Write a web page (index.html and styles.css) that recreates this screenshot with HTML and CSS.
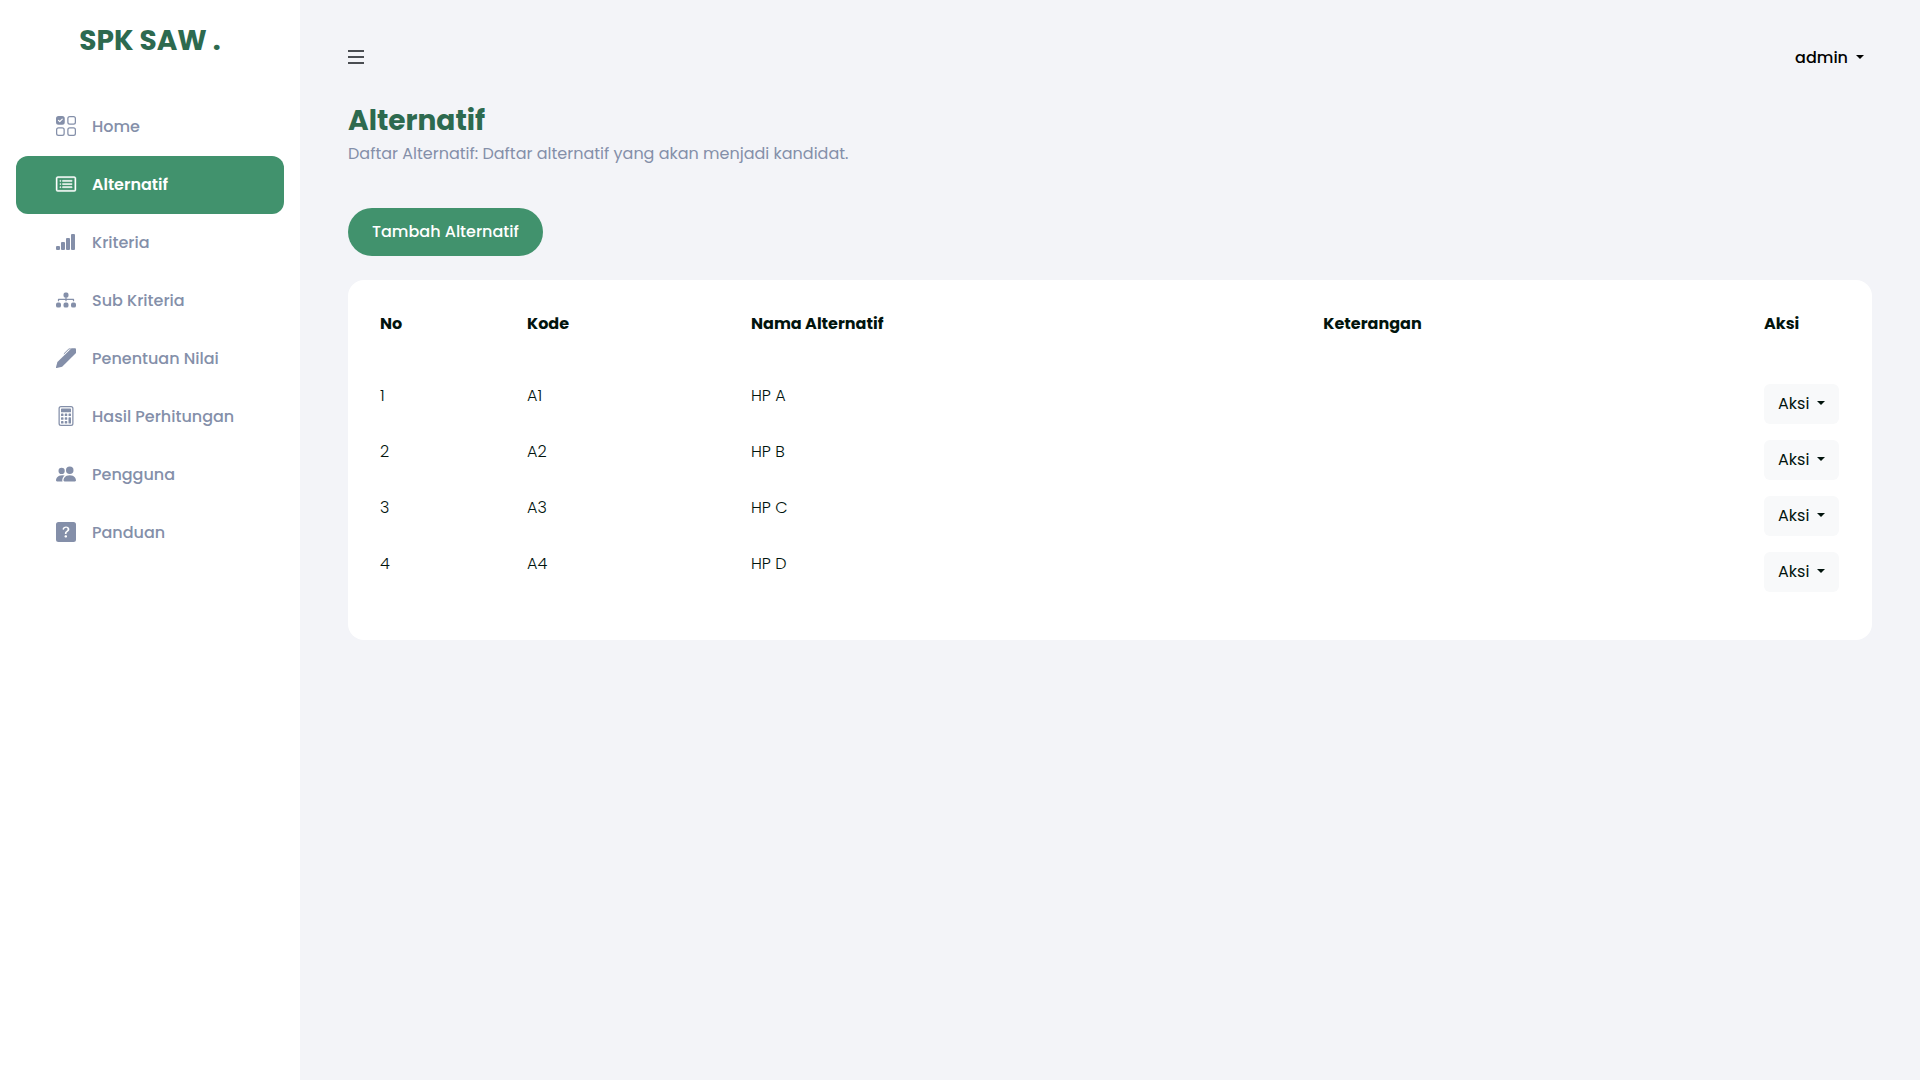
FILE: index.html
```html
<!DOCTYPE html>
<html lang="id">
<head>
<meta charset="utf-8">
<title>SPK SAW - Alternatif</title>
<meta name="viewport" content="width=device-width, initial-scale=1">
<link rel="stylesheet" href="styles.css">
</head>
<body>
<div class="layout">
  <aside class="sidebar">
    <a class="brand" href="#">SPK SAW .</a>
    <nav class="menu">
      <a class="menu-link" href="#"><svg class="icon" viewBox="0 0 16 16"><path d="M2 10h3a1 1 0 0 1 1 1v3a1 1 0 0 1-1 1H2a1 1 0 0 1-1-1v-3a1 1 0 0 1 1-1m9-9h3a1 1 0 0 1 1 1v3a1 1 0 0 1-1 1h-3a1 1 0 0 1-1-1V2a1 1 0 0 1 1-1m0 9a1 1 0 0 0-1 1v3a1 1 0 0 0 1 1h3a1 1 0 0 0 1-1v-3a1 1 0 0 0-1-1zm0-10a2 2 0 0 0-2 2v3a2 2 0 0 0 2 2h3a2 2 0 0 0 2-2V2a2 2 0 0 0-2-2zM2 9a2 2 0 0 0-2 2v3a2 2 0 0 0 2 2h3a2 2 0 0 0 2-2v-3a2 2 0 0 0-2-2zm7 2a2 2 0 0 1 2-2h3a2 2 0 0 1 2 2v3a2 2 0 0 1-2 2h-3a2 2 0 0 1-2-2zM0 2a2 2 0 0 1 2-2h3a2 2 0 0 1 2 2v3a2 2 0 0 1-2 2H2a2 2 0 0 1-2-2zm5.354.854a.5.5 0 1 0-.708-.708L3 3.793l-.646-.647a.5.5 0 1 0-.708.708l1 1a.5.5 0 0 0 .708 0z"/></svg>Home</a>
      <a class="menu-link active" href="#" aria-current="page"><svg class="icon icon-strong" viewBox="0 0 16 16"><path d="M14.5 3a.5.5 0 0 1 .5.5v9a.5.5 0 0 1-.5.5h-13a.5.5 0 0 1-.5-.5v-9a.5.5 0 0 1 .5-.5zm-13-1A1.500 1.500 0 0 0 0 3.500v9A1.500 1.500 0 0 0 1.500 14h13a1.500 1.500 0 0 0 1.500-1.500v-9A1.500 1.500 0 0 0 14.500 2z"/><path d="M5 8a.5.5 0 0 1 .5-.5h7a.5.5 0 0 1 0 1h-7A.5.5 0 0 1 5 8m0-2.500a.5.5 0 0 1 .5-.5h7a.5.5 0 0 1 0 1h-7a.5.5 0 0 1-.5-.5m0 5a.5.5 0 0 1 .5-.5h7a.5.5 0 0 1 0 1h-7a.5.5 0 0 1-.5-.5m-1-5a.5.5 0 1 1-1 0 .5.5 0 0 1 1 0M4 8a.5.5 0 1 1-1 0 .5.5 0 0 1 1 0m0 2.500a.5.5 0 1 1-1 0 .5.5 0 0 1 1 0"/></svg>Alternatif</a>
      <a class="menu-link" href="#"><svg class="icon" viewBox="0 0 20 20"><path d="M1 14h2a1 1 0 0 1 1 1v2a1 1 0 0 1-1 1H1a1 1 0 0 1-1-1v-2a1 1 0 0 1 1-1m5-4h2a1 1 0 0 1 1 1v6a1 1 0 0 1-1 1H6a1 1 0 0 1-1-1v-6a1 1 0 0 1 1-1m5-4h2a1 1 0 0 1 1 1v10a1 1 0 0 1-1 1h-2a1 1 0 0 1-1-1V7a1 1 0 0 1 1-1m5-4h2a1 1 0 0 1 1 1v14a1 1 0 0 1-1 1h-2a1 1 0 0 1-1-1V3a1 1 0 0 1 1-1"/></svg>Kriteria</a>
      <a class="menu-link" href="#"><svg class="icon" viewBox="0 0 16 16"><path fill-rule="evenodd" d="M6 3.500A1.500 1.500 0 0 1 7.500 2h1A1.500 1.500 0 0 1 10 3.500v1A1.500 1.500 0 0 1 8.500 6v1H14a.5.5 0 0 1 .5.5v1a.5.5 0 0 1-1 0V8h-5v.5a.5.5 0 0 1-1 0V8h-5v.5a.5.5 0 0 1-1 0v-1A.5.5 0 0 1 2 7h5.500V6A1.500 1.500 0 0 1 6 4.500zm-6 8A1.500 1.500 0 0 1 1.500 10h1A1.500 1.500 0 0 1 4 11.500v1A1.500 1.500 0 0 1 2.500 14h-1A1.500 1.500 0 0 1 0 12.500zm6 0A1.500 1.500 0 0 1 7.500 10h1a1.500 1.500 0 0 1 1.500 1.500v1A1.500 1.500 0 0 1 8.500 14h-1A1.500 1.500 0 0 1 6 12.500zm6 0a1.500 1.500 0 0 1 1.500-1.500h1a1.500 1.500 0 0 1 1.500 1.500v1a1.500 1.500 0 0 1-1.500 1.500h-1a1.500 1.500 0 0 1-1.500-1.500z"/></svg>Sub Kriteria</a>
      <a class="menu-link" href="#"><svg class="icon" viewBox="0 0 16 16"><path d="M12.400.2h2.800a.8.8 0 0 1 .8.8v3L4.900 14.900.6 16a.5.5 0 0 1-.6-.6l1.100-4.300L11.400 1.100z"/><path d="M6.500 4.500 9.800 1.200q.6-.6 1.600-.6" fill="none" stroke="currentColor" stroke-width=".8" stroke-linecap="round"/></svg>Penentuan Nilai</a>
      <a class="menu-link" href="#"><svg class="icon" viewBox="0 0 16 16"><path d="M12 1a1 1 0 0 1 1 1v12a1 1 0 0 1-1 1H4a1 1 0 0 1-1-1V2a1 1 0 0 1 1-1zM4 0a2 2 0 0 0-2 2v12a2 2 0 0 0 2 2h8a2 2 0 0 0 2-2V2a2 2 0 0 0-2-2z"/><path d="M4 2.500a.5.5 0 0 1 .5-.5h7a.5.5 0 0 1 .5.5v2a.5.5 0 0 1-.5.5h-7a.5.5 0 0 1-.5-.5zm0 4a.5.5 0 0 1 .5-.5h1a.5.5 0 0 1 .5.5v1a.5.5 0 0 1-.5.5h-1a.5.5 0 0 1-.5-.5zm0 3a.5.5 0 0 1 .5-.5h1a.5.5 0 0 1 .5.5v1a.5.5 0 0 1-.5.5h-1a.5.5 0 0 1-.5-.5zm0 3a.5.5 0 0 1 .5-.5h1a.5.5 0 0 1 .5.5v1a.5.5 0 0 1-.5.5h-1a.5.5 0 0 1-.5-.5zm3-6a.5.5 0 0 1 .5-.5h1a.5.5 0 0 1 .5.5v1a.5.5 0 0 1-.5.5h-1a.5.5 0 0 1-.5-.5zm0 3a.5.5 0 0 1 .5-.5h1a.5.5 0 0 1 .5.5v1a.5.5 0 0 1-.5.5h-1a.5.5 0 0 1-.5-.5zm0 3a.5.5 0 0 1 .5-.5h1a.5.5 0 0 1 .5.5v1a.5.5 0 0 1-.5.5h-1a.5.5 0 0 1-.5-.5zm3-6a.5.5 0 0 1 .5-.5h1a.5.5 0 0 1 .5.5v1a.5.5 0 0 1-.5.5h-1a.5.5 0 0 1-.5-.5zm0 3a.5.5 0 0 1 .5-.5h1a.5.5 0 0 1 .5.5v4a.5.5 0 0 1-.5.5h-1a.5.5 0 0 1-.5-.5z"/></svg>Hasil Perhitungan</a>
      <a class="menu-link" href="#"><svg class="icon" viewBox="0 0 16 16"><path d="M7 14s-1 0-1-1 1-4 5-4 5 3 5 4-1 1-1 1zm4-6a3 3 0 1 0 0-6 3 3 0 0 0 0 6m-5.784 6A2.240 2.240 0 0 1 5 13c0-1.355.68-2.750 1.936-3.720A6.300 6.300 0 0 0 5 9c-4 0-5 3-5 4s1 1 1 1zM4.500 8a2.500 2.500 0 1 0 0-5 2.500 2.500 0 0 0 0 5"/></svg>Pengguna</a>
      <a class="menu-link" href="#"><svg class="icon" viewBox="0 0 16 16"><path d="M2 0a2 2 0 0 0-2 2v12a2 2 0 0 0 2 2h12a2 2 0 0 0 2-2V2a2 2 0 0 0-2-2zm3.496 6.033a.237.237 0 0 1-.240-.247C5.350 4.091 6.737 3.500 8.005 3.500c1.396 0 2.672.730 2.672 2.240 0 1.080-.635 1.594-1.244 2.057-.737.559-1.010.768-1.010 1.486v.105a.25.25 0 0 1-.25.25h-.810a.25.25 0 0 1-.25-.246l-.004-.217c-.038-.927.495-1.498 1.168-1.987.590-.444.965-.736.965-1.371 0-.825-.628-1.168-1.314-1.168-.901 0-1.358.603-1.441 1.236-.017.130-.120.239-.252.239zm2.325 6.443c-.584 0-1.009-.394-1.009-.927 0-.552.425-.940 1.010-.940.609 0 1.028.388 1.028.940 0 .533-.420.927-1.029.927"/></svg>Panduan</a>
    </nav>
  </aside>
  <div class="content">
    <header class="topbar">
      <button class="toggle" type="button" aria-label="Menu"><span class="bar"></span><span class="bar"></span><span class="bar"></span></button>
      <button class="user" type="button">admin<span class="caret"></span></button>
    </header>
    <main>
      <h1 class="title">Alternatif</h1>
      <p class="subtitle">Daftar Alternatif: Daftar alternatif yang akan menjadi kandidat.</p>
      <a class="add" href="#">Tambah Alternatif</a>
      <section class="card">
        <table class="table">
          <colgroup><col class="col-no"><col class="col-code"><col class="col-name"><col class="col-note"><col class="col-action"></colgroup>
          <thead><tr><th>No</th><th>Kode</th><th>Nama Alternatif</th><th>Keterangan</th><th>Aksi</th></tr></thead>
          <tbody>
            <tr><td>1</td><td>A1</td><td>HP A</td><td></td><td><button class="action" type="button">Aksi<span class="caret"></span></button></td></tr>
            <tr><td>2</td><td>A2</td><td>HP B</td><td></td><td><button class="action" type="button">Aksi<span class="caret"></span></button></td></tr>
            <tr><td>3</td><td>A3</td><td>HP C</td><td></td><td><button class="action" type="button">Aksi<span class="caret"></span></button></td></tr>
            <tr><td>4</td><td>A4</td><td>HP D</td><td></td><td><button class="action" type="button">Aksi<span class="caret"></span></button></td></tr>
          </tbody>
        </table>
      </section>
    </main>
  </div>
</div>
</body>
</html>
```
FILE: styles.css
```css
* {
  box-sizing: border-box;
}

body {
  margin: 0;
  background: #f3f4f8;
  color: #02140d;
  font-family: Poppins, Inter, sans-serif;
  font-size: 16px;
  line-height: 24px;
}

a {
  color: inherit;
  text-decoration: none;
}

button {
  border: 0;
  background: none;
  color: inherit;
  font: inherit;
  cursor: pointer;
}

.layout {
  display: flex;
  min-height: 100vh;
}

/* Sidebar */
.sidebar {
  flex: 0 0 300px;
  padding: 20px 16px;
  background: #fff;
}

.brand {
  display: block;
  margin-bottom: 36px;
  color: #2d6a4f;
  font-size: 28px;
  font-weight: 700;
  line-height: 42px;
  text-align: center;
}

.menu-link {
  display: flex;
  align-items: center;
  gap: 16px;
  height: 58px;
  padding: 0 40px;
  border-radius: 12px;
  color: #848fa9;
  font-weight: 500;
}

.menu-link.active {
  background: #41926d;
  color: #fff;
  font-weight: 600;
}

.icon {
  flex: none;
  width: 20px;
  height: 20px;
  margin-bottom: 2px;
  fill: currentColor;
}

.icon-strong {
  stroke: currentColor;
  stroke-width: 0.3;
  overflow: visible;
}

/* Main area */
.content {
  flex: 1;
  min-width: 0;
  padding: 32px 48px;
}

.topbar {
  display: flex;
  align-items: center;
  justify-content: space-between;
  height: 50px;
  margin-bottom: 18px;
}

.toggle {
  display: grid;
  gap: 4px;
  width: 16px;
  padding: 0;
}

.bar {
  height: 2px;
  background: #4a4d52;
}

.user {
  display: flex;
  align-items: center;
  gap: 8px;
  padding: 2px 8px 0;
  color: #000;
  font-weight: 500;
}

.caret {
  margin-bottom: 2px;
  border-top: 4px solid currentColor;
  border-right: 4px solid transparent;
  border-left: 4px solid transparent;
}

.title {
  margin: 0;
  color: #2d6a4f;
  font-size: 28px;
  font-weight: 700;
  line-height: 42px;
}

.subtitle {
  margin: 0 0 42px;
  color: #848fa9;
}

.add {
  display: inline-block;
  margin-bottom: 24px;
  padding: 12px 24px;
  border-radius: 24px;
  background: #41926d;
  color: #fff;
  font-weight: 500;
}

.card {
  padding: 16px 32px 40px;
  border-radius: 16px;
  background: #fff;
}

.table {
  width: 100%;
  border-collapse: collapse;
  table-layout: fixed;
}

.col-no { width: 147px; }
.col-code { width: 224px; }
.col-name { width: 39.2%; }
.col-action { width: 76px; }

.table th {
  padding: 16px 0 40px;
  font-weight: 700;
  text-align: left;
}

.table td {
  padding: 8px 0;
  font-weight: 300;
  vertical-align: top;
}

.action {
  display: flex;
  align-items: center;
  gap: 8px;
  height: 40px;
  padding: 0 14px;
  border-radius: 6px;
  background: #f8f9fa;
  font-weight: 400;
}
```
